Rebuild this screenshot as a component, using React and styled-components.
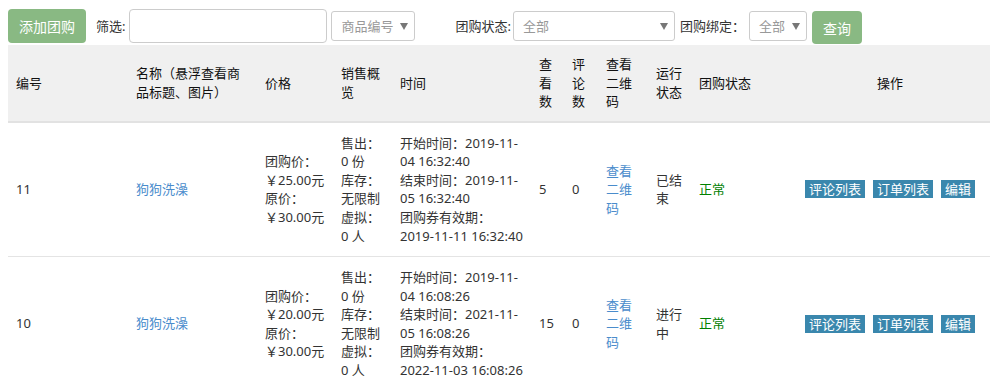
import React from "react";
import styled, { createGlobalStyle } from "styled-components";

const Global = createGlobalStyle`
  html, body { margin: 0; padding: 0; background: #fff; }
  body {
    font-family: "Noto Sans", "Noto Sans CJK SC", sans-serif;
    font-size: 13px;
    line-height: 1.42857;
    color: #333;
  }
`;

const Page = styled.div`
  padding: 9px 8px 0;
  width: 982px;
`;

const Toolbar = styled.div`
  display: flex;
  align-items: center;
  height: 34px;
  margin-bottom: 2px;
`;

const GreenButton = styled.button`
  height: ${(p) => p.$h}px;
  padding: 0 ${(p) => p.$px}px;
  margin: ${(p) => p.$m};
  border: none;
  border-radius: 4px;
  background: #89b983;
  color: #fff;
  font-family: inherit;
  font-size: 14px;
  cursor: pointer;
`;

const Label = styled.span`
  margin: ${(p) => p.$m};
  color: #333;
  white-space: nowrap;
`;

const TextInput = styled.input`
  box-sizing: border-box;
  width: 198px;
  height: 34px;
  border: 1px solid #ccc;
  border-radius: 4px;
  margin-right: 4px;
  padding: 0 8px;
  font-family: inherit;
`;

const Select = styled.div`
  box-sizing: border-box;
  display: flex;
  align-items: center;
  justify-content: space-between;
  width: ${(p) => p.$w}px;
  height: 30px;
  padding: 0 6px 0 9px;
  border: 1px solid #ccc;
  border-radius: 3px;
  color: #999;
  margin: ${(p) => p.$m};
`;

const Arrow = styled.span`
  width: 0;
  height: 0;
  border-left: 4px solid transparent;
  border-right: 4px solid transparent;
  border-top: 7px solid #777;
`;

const Table = styled.table`
  width: 982px;
  border-collapse: collapse;
  table-layout: fixed;
`;

const Th = styled.th`
  background: #f0f0f0;
  font-weight: normal;
  color: #111;
  text-align: ${(p) => (p.$center ? "center" : "left")};
  vertical-align: middle;
  padding: 10px 8px;
  border-bottom: 2px solid #e2e2e2;
  white-space: pre-line;
`;

const Td = styled.td`
  text-align: ${(p) => (p.$center ? "center" : "left")};
  vertical-align: middle;
  padding: 11px 8px;
  border-top: 1px solid #e4e4e4;
  white-space: pre-line;
  color: ${(p) => p.$color || "#333"};
`;

const Link = styled.a`
  color: #4a8ccc;
  text-decoration: none;
  white-space: pre-line;
`;

const Ops = styled.div`
  display: flex;
  justify-content: center;
  gap: 8px;
`;

const OpLabel = styled.span`
  display: inline-block;
  height: 18px;
  line-height: 18px;
  padding: 0 4px;
  background: #3a87ad;
  color: #fff;
  font-size: 13px;
  white-space: nowrap;
`;

const widths = [120, 129, 76, 59, 139, 33, 34, 50, 43, 99, 200];

const headers = [
  "编号",
  "名称（悬浮查看商\n品标题、图片）",
  "价格",
  "销售概\n览",
  "时间",
  "查\n看\n数",
  "评\n论\n数",
  "查看\n二维\n码",
  "运行\n状态",
  "团购状态",
];

const rows = [
  {
    id: "11",
    name: "狗狗洗澡",
    price: "团购价：\n ￥25.00元\n原价：\n ￥30.00元",
    sales: "售出：\n0 份\n库存：\n无限制\n虚拟：\n0 人",
    time:
      "开始时间：2019-11-\n04 16:32:40\n结束时间：2019-11-\n05 16:32:40\n团购券有效期：\n2019-11-11 16:32:40",
    views: "5",
    comments: "0",
    run: "已结\n束",
  },
  {
    id: "10",
    name: "狗狗洗澡",
    price: "团购价：\n ￥20.00元\n原价：\n ￥30.00元",
    sales: "售出：\n0 份\n库存：\n无限制\n虚拟：\n0 人",
    time:
      "开始时间：2019-11-\n04 16:08:26\n结束时间：2021-11-\n05 16:08:26\n团购券有效期：\n2022-11-03 16:08:26",
    views: "15",
    comments: "0",
    run: "进行\n中",
  },
];

export default function App() {
  return (
    <>
      <Global />
      <Page>
        <Toolbar>
          <GreenButton $h={34} $px={11} $m="0 10px 0 0">添加团购</GreenButton>
          <Label $m="0 4px 0 0">筛选:</Label>
          <TextInput />
          <Select $w={84} $m="0 40px 0 0">
            商品编号
            <Arrow />
          </Select>
          <Label $m="0 2px 0 0">团购状态:</Label>
          <Select $w={162} $m="0 5px 0 0">
            全部
            <Arrow />
          </Select>
          <Label $m="0 4px 0 0">团购绑定：</Label>
          <Select $w={58} $m="0 5px 0 0">
            全部
            <Arrow />
          </Select>
          <GreenButton $h={33} $px={11} $m="3px 0 0 0">查询</GreenButton>
        </Toolbar>
        <Table>
          <colgroup>
            {widths.map((w, i) => (
              <col key={i} style={{ width: w }} />
            ))}
          </colgroup>
          <thead>
            <tr>
              {headers.map((h) => (
                <Th key={h}>{h}</Th>
              ))}
              <Th $center>操作</Th>
            </tr>
          </thead>
          <tbody>
            {rows.map((r) => (
              <tr key={r.id}>
                <Td>{r.id}</Td>
                <Td>
                  <Link href="#">{r.name}</Link>
                </Td>
                <Td>{r.price}</Td>
                <Td>{r.sales}</Td>
                <Td>{r.time}</Td>
                <Td>{r.views}</Td>
                <Td>{r.comments}</Td>
                <Td>
                  <Link href="#">{"查看\n二维\n码"}</Link>
                </Td>
                <Td>{r.run}</Td>
                <Td $color="#008000">正常</Td>
                <Td $center>
                  <Ops>
                    <OpLabel>评论列表</OpLabel>
                    <OpLabel>订单列表</OpLabel>
                    <OpLabel>编辑</OpLabel>
                  </Ops>
                </Td>
              </tr>
            ))}
          </tbody>
        </Table>
      </Page>
    </>
  );
}
